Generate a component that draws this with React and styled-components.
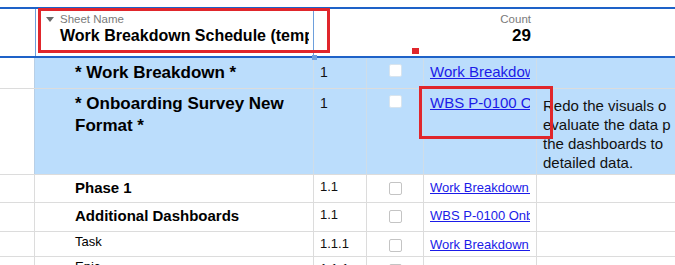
import React from 'react';
import styled, { createGlobalStyle } from 'styled-components';

const GlobalStyle = createGlobalStyle`
  html, body { margin: 0; padding: 0; background: #fff; }
  body { font-family: "Liberation Sans", Arial, sans-serif; overflow: hidden; }
`;

const COLS = '35px 279px 53px 57px 113px 1fr';

const Page = styled.div`
  position: relative;
  width: 675px;
  height: 265px;
  overflow: hidden;
  padding-top: 7px;
  box-sizing: border-box;
`;

const Header = styled.div`
  display: grid;
  grid-template-columns: ${COLS};
  height: 47px;
  border-top: 2px solid #1e62c8;
  border-bottom: 2px solid #1e62c8;
`;

const HeadCell = styled.div`
  position: relative;
  box-sizing: border-box;
  ${p => p.$selected && 'border-left: 1px solid #6d9fdc; border-right: 1px solid #6d9fdc;'}
  ${p => p.$right && 'text-align: right; padding-right: 6px;'}
`;

const NameHead = styled.div`
  padding: 4px 4px 0 10px;
  overflow: hidden;
`;

const Label = styled.div`
  display: flex;
  align-items: center;
  gap: 6px;
  font-size: 11.5px;
  color: #7a7a7a;
  line-height: 13px;
`;

const Caret = styled.span`
  width: 0;
  height: 0;
  border-left: 4px solid transparent;
  border-right: 4px solid transparent;
  border-top: 5px solid #6a6a6a;
`;

const HeadValue = styled.div`
  font-size: 16px;
  font-weight: bold;
  color: #000;
  white-space: nowrap;
  overflow: hidden;
  line-height: 20px;
  padding-left: 14px;
`;

const CountLabel = styled.div`
  font-size: 11.5px;
  color: #7a7a7a;
  line-height: 13px;
  padding-top: 4px;
`;

const CountValue = styled.div`
  font-size: 17px;
  font-weight: bold;
  line-height: 20px;
  color: #000;
`;

const Handle = styled.span`
  position: absolute;
  right: -4px;
  bottom: -4px;
  width: 5px;
  height: 5px;
  background: #6d9fdc;
`;

const Row = styled.div`
  display: grid;
  grid-template-columns: ${COLS};
  border-bottom: 1px solid #dcdcdc;
  height: ${p => p.$h}px;
  box-sizing: border-box;
`;

const Cell = styled.div`
  box-sizing: border-box;
  overflow: hidden;
  border-right: 1px solid ${p => (p.$blue ? '#cfdde8' : '#dcdcdc')};
  background: ${p => (p.$blue ? '#bbddfc' : '#fff')};
  &:first-child { background: #fff; border-right-color: ${p => (p.$blue ? '#b8cfe6' : '#dcdcdc')}; }
  &:last-child { border-right: none; }
`;

const Name = styled.div`
  padding-left: 40px;
  font-weight: bold;
  color: #000;
  font-size: ${p => p.$size}px;
  line-height: ${p => p.$lh}px;
  padding-top: ${p => p.$top}px;
  ${p => p.$plain && 'font-weight: normal;'}
`;

const Num = styled.div`
  padding: ${p => p.$top}px 0 0 6px;
  font-size: ${p => p.$size}px;
  line-height: 16px;
  color: #111;
`;

const Check = styled.div`
  width: 13px;
  height: 13px;
  margin: ${p => p.$top}px 0 0 22px;
  box-sizing: border-box;
  background: #fff;
  border: 1px solid ${p => (p.$blue ? '#d8e4ee' : '#c4c4c4')};
  border-radius: 2px;
`;

const Link = styled.a`
  display: block;
  margin: ${p => p.$top}px 6px 0 6px;
  font-size: ${p => p.$size}px;
  line-height: 18px;
  color: #1b1be8;
  text-decoration: underline;
  white-space: nowrap;
  overflow: hidden;
`;

const Desc = styled.div`
  padding: 7px 0 0 6px;
  font-size: 15px;
  line-height: 19px;
  color: #111;
  white-space: nowrap;
`;

const Marker = styled.div`
  position: absolute;
  box-sizing: border-box;
  border: 3px solid #e0262c;
  pointer-events: none;
`;

const Dot = styled.div`
  position: absolute;
  left: 412px;
  top: 48px;
  width: 7px;
  height: 6px;
  background: #e0262c;
`;

const rows = [
  { blue: true, h: 31, name: '* Work Breakdown *', size: 17, lh: 20, top: 5, num: '1', numSize: 14, link: 'Work Breakdown Schedule', linkSize: 15 },
  { blue: true, h: 86, name: '* Onboarding Survey New Format *', size: 17, lh: 22, top: 4, num: '1', numSize: 14, link: 'WBS P-0100 Onboarding', linkSize: 15,
    desc: ['Redo the visuals o', 'evaluate the data p', 'the dashboards to', 'detailed data.'] },
  { h: 28, name: 'Phase 1', size: 15, lh: 18, top: 4, num: '1.1', numSize: 13, link: 'Work Breakdown Schedule', linkSize: 13 },
  { h: 29, name: 'Additional Dashboards', size: 15, lh: 18, top: 4, num: '1.1', numSize: 13, link: 'WBS P-0100 Onboarding', linkSize: 13 },
  { h: 25, name: 'Task', size: 13, lh: 16, top: 2, plain: true, num: '1.1.1', numSize: 13, link: 'Work Breakdown Schedule', linkSize: 13 },
  { h: 25, name: 'Epic', size: 13, lh: 16, top: 2, plain: true, num: '1.1.1', numSize: 13, link: 'WBS P-0100 Onboarding', linkSize: 13 },
];

export default function App() {
  return (
    <Page>
      <GlobalStyle />
      <Header>
        <HeadCell />
        <HeadCell $selected>
          <NameHead>
            <Label><Caret />Sheet Name</Label>
            <HeadValue>Work Breakdown Schedule (template)</HeadValue>
          </NameHead>
          <Handle />
        </HeadCell>
        <HeadCell />
        <HeadCell />
        <HeadCell $right>
          <CountLabel>Count</CountLabel>
          <CountValue>29</CountValue>
        </HeadCell>
        <HeadCell />
      </Header>
      {rows.map((r, i) => (
        <Row key={i} $h={r.h}>
          <Cell $blue={r.blue} />
          <Cell $blue={r.blue}>
            <Name $size={r.size} $lh={r.lh} $top={r.top} $plain={r.plain}>{r.name}</Name>
          </Cell>
          <Cell $blue={r.blue}>
            <Num $size={r.numSize} $top={r.blue ? 6 : 4}>{r.num}</Num>
          </Cell>
          <Cell $blue={r.blue}>
            <Check $blue={r.blue} $top={r.blue ? 6 : 7} />
          </Cell>
          <Cell $blue={r.blue}>
            <Link href="#" $size={r.linkSize} $top={r.blue ? 5 : 4}>{r.link}</Link>
          </Cell>
          <Cell $blue={r.blue}>
            {r.desc && <Desc>{r.desc.map((d, j) => <div key={j}>{d}</div>)}</Desc>}
          </Cell>
        </Row>
      ))}
      <Marker style={{ left: 38, top: 8, width: 292, height: 45 }} />
      <Marker style={{ left: 419, top: 86, width: 134, height: 53 }} />
      <Dot />
    </Page>
  );
}
